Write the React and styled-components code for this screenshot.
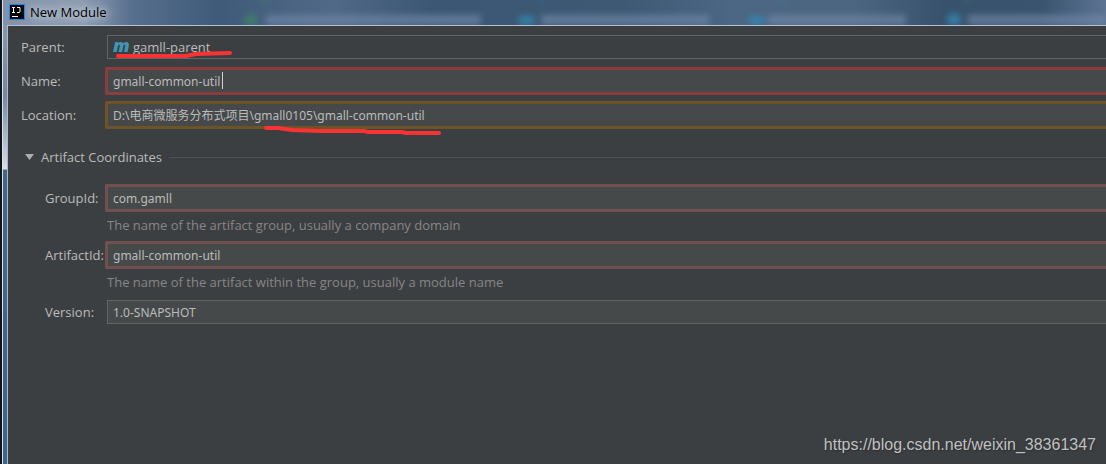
import React, { useState } from 'react';
import styled, { createGlobalStyle } from 'styled-components';

const GlobalStyle = createGlobalStyle`
  * {
    box-sizing: border-box;
  }
  body {
    margin: 0;
    background: #3c3f41;
    color: #bbbbbb;
    font-family: 'Open Sans', 'Noto Sans CJK SC', sans-serif;
    font-size: 13px;
    line-height: 18px;
    overflow-x: hidden;
  }
`;

const Window = styled.div`
  position: relative;
  min-height: 100vh;
  display: flex;
  flex-direction: column;
  border-left: 2px solid #10151c;
  background: #47617f;
`;

const TitleBar = styled.header`
  position: relative;
  display: flex;
  align-items: center;
  gap: 5px;
  height: 25px;
  padding: 0 0 2px 6px;
  overflow: hidden;
  border-left: 1px solid #dbe3ec;
  background: linear-gradient(
    90deg,
    #8292a8 0,
    #8c9bb0 80px,
    #566f8d 130px,
    #3f5b79 215px,
    #506987 330px,
    #3b5773 430px,
    #3d5974 620px,
    #4c6783 730px,
    #4c6681 850px,
    #38526d 940px,
    #3a546f 1040px,
    #5d7593 1104px
  );
`;

const Backdrop = styled.svg`
  position: absolute;
  top: 0;
  left: 0;
  width: 1103px;
  height: 25px;
  filter: blur(3px);
`;

const Logo = styled.svg`
  position: relative;
  width: 16px;
  height: 16px;
`;

const Title = styled.h1`
  position: relative;
  margin: 0;
  color: #000;
  font-size: 13px;
  font-weight: 400;
  text-shadow: 0 0 6px #c3cddb, 0 0 10px #c3cddb, 0 0 14px #c3cddb;
`;

const Frame = styled.div`
  flex: 1;
  display: flex;
  padding-left: 4px;
  border-left: 1px solid #dbe3ec;
  background: linear-gradient(
    180deg,
    #8796ab 0,
    #7588a1 70px,
    #d2d8e0 140px,
    #dfe3e8 144px,
    #476685 145px,
    #40648a 100%
  );
`;

const Panel = styled.main`
  flex: 1;
  min-width: 0;
  padding: 7px 0 0 13px;
  border-top: 1px solid #b4c1d3;
  border-left: 1px solid #a9b9cd;
  background: #3c3f41;
`;

const Row = styled.div`
  display: flex;
  align-items: center;
  margin-bottom: ${({ $gap }) => $gap || 0}px;
  padding-left: ${({ $nested }) => ($nested ? 24 : 0)}px;
`;

const Label = styled.label`
  flex: none;
  width: ${({ $nested }) => ($nested ? 60 : 84)}px;
  white-space: nowrap;
`;

const borders = {
  error: '#8b3c3c',
  warning: '#6e5324',
  invalid: '#725050',
};

/* A plain field keeps 2px around it, where the state outline would be */
const Field = styled.div`
  position: relative;
  flex: 1;
  min-width: 0;
  display: flex;
  align-items: center;
  height: ${({ $state }) => ($state ? 28 : 24)}px;
  margin: ${({ $state }) => ($state ? '0' : '2px 0 2px 2px')};
  padding-left: 5px;
  border: ${({ $state }) =>
    $state ? `3px solid ${borders[$state]}` : '1px solid #646464'};
  border-right: 0;
  border-radius: ${({ $state }) => ($state ? '2px 0 0 2px' : '0')};
  background: ${({ $plain }) => ($plain ? '#3c3f41' : '#45494a')};
`;

const Input = styled.input`
  width: 100%;
  height: 100%;
  padding: 0;
  border: 0;
  outline: 0;
  background: transparent;
  color: #bbbbbb;
  font: 12px 'Noto Sans', 'Noto Sans CJK SC', sans-serif;
`;

const Select = styled.select`
  flex: 1;
  height: 100%;
  padding: 0;
  border: 0;
  outline: 0;
  appearance: none;
  background: transparent;
  color: #bbbbbb;
  font: inherit;
`;

const MavenIcon = styled.span`
  width: 20px;
  color: #4296b4;
  font: italic 800 18px/18px 'Open Sans', sans-serif;
  transform: translateY(-2px);
`;

const Caret = styled.span`
  position: absolute;
  top: 2px;
  left: 114px;
  width: 1px;
  height: 17px;
  background: #d0d0d0;
`;

const Section = styled.button`
  display: flex;
  align-items: center;
  gap: 7px;
  width: 100%;
  margin: 19px 0 18px;
  padding: 0 0 0 4px;
  border: 0;
  background: transparent;
  color: #bbbbbb;
  font: inherit;

  &::after {
    content: '';
    flex: 1;
    height: 1px;
    background: #515151;
  }
`;

const Hint = styled.p`
  margin: 4px 0 7px 86px;
  color: #868686;
`;

const Mark = styled.svg`
  position: absolute;
  top: ${({ $top }) => $top}px;
  left: ${({ $left }) => $left}px;
  overflow: visible;
  pointer-events: none;
  fill: none;
  stroke: #f93333;
  stroke-width: 4;
  stroke-linecap: round;
  stroke-linejoin: round;
`;

const Watermark = styled.a`
  position: absolute;
  right: 10px;
  bottom: 8px;
  color: #c0c1c2;
  font: 16px/22px 'Liberation Sans', Arial, sans-serif;
  text-decoration: none;
  text-shadow: 1px 1px 1px #2b2d2f;
`;

const TextRow = ({ id, label, state, value, nested, gap, children }) => {
  const [text, setText] = useState(value);

  return (
    <Row $gap={gap} $nested={nested}>
      <Label htmlFor={id} $nested={nested}>
        {label}
      </Label>
      <Field $state={state}>
        <Input
          id={id}
          value={text}
          spellCheck={false}
          onChange={(e) => setText(e.target.value)}
        />
        {children}
      </Field>
    </Row>
  );
};

const GlassBackdrop = () => (
  <Backdrop viewBox="0 0 1103 25" aria-hidden="true">
    <g fill="#6f86a5" opacity="0.7">
      <rect x="263" y="15" width="215" height="10" />
      <rect x="538" y="15" width="168" height="10" />
      <rect x="765" y="15" width="138" height="10" />
      <rect x="965" y="15" width="138" height="10" />
    </g>
    <g fill="#3f8a62" opacity="0.8">
      <circle cx="248" cy="20" r="6" />
      <circle cx="262" cy="-1" r="4" />
      <circle cx="964" cy="-2" r="4" />
    </g>
    <g fill="#3489b4" opacity="0.8">
      <rect x="516" y="16" width="15" height="9" />
      <rect x="746" y="16" width="15" height="9" />
      <circle cx="951" cy="20" r="7" />
      <circle cx="538" cy="-2" r="4" />
      <circle cx="779" cy="-2" r="4" />
    </g>
  </Backdrop>
);

const App = () => {
  const [open, setOpen] = useState(true);

  return (
    <>
      <GlobalStyle />
      <Window>
        <TitleBar>
          <GlassBackdrop />
          <Logo viewBox="0 0 16 16" aria-hidden="true">
            <rect width="16" height="16" fill="#1c84ee" />
            <rect x="1" y="1" width="14" height="14" fill="#000" />
            <path
              d="M3 3.5h3M4.5 3.5v5M3 8.5h3M8 3.5h3v4q0 1-1 1h-2"
              fill="none"
              stroke="#fff"
            />
            <rect x="3" y="12" width="6" height="1" fill="#fff" />
          </Logo>
          <Title>New Module</Title>
        </TitleBar>
        <Frame>
          <Panel>
            <Row $gap={6}>
              <Label htmlFor="parent">Parent:</Label>
              <Field $plain>
                <MavenIcon aria-hidden="true">m</MavenIcon>
                <Select id="parent">
                  <option>gamll-parent</option>
                </Select>
                <Mark $top={16} $left={8} width="116" height="6">
                  <path d="M2 4H70L80 2L114 1" />
                </Mark>
              </Field>
            </Row>
            <TextRow
              id="name"
              label="Name:"
              state="error"
              value="gmall-common-util"
              gap={6}
            >
              <Caret />
            </TextRow>
            <TextRow
              id="location"
              label="Location:"
              state="warning"
              value="D:\电商微服务分布式项目\gmall0105\gmall-common-util"
            >
              <Mark $top={22} $left={156} width="178" height="8">
                <path d="M2 2L14 2L28 4L56 5L100 5L104 6L138 6L142 7L175 7" />
              </Mark>
            </TextRow>
            <Section type="button" onClick={() => setOpen(!open)}>
              <svg width="9" height="6" aria-hidden="true">
                <path d="M0 0h9L4.5 6z" fill="#adadad" />
              </svg>
              Artifact Coordinates
            </Section>
            {open && (
              <>
                <TextRow
                  id="group"
                  label="GroupId:"
                  state="invalid"
                  value="com.gamll"
                  nested
                />
                <Hint>
                  The name of the artifact group, usually a company domain
                </Hint>
                <TextRow
                  id="artifact"
                  label="ArtifactId:"
                  state="invalid"
                  value="gmall-common-util"
                  nested
                />
                <Hint>
                  The name of the artifact within the group, usually a module
                  name
                </Hint>
                <TextRow
                  id="version"
                  label="Version:"
                  value="1.0-SNAPSHOT"
                  nested
                />
              </>
            )}
          </Panel>
        </Frame>
        <Watermark href="https://blog.csdn.net/weixin_38361347">
          https://blog.csdn.net/weixin_38361347
        </Watermark>
      </Window>
    </>
  );
};

export default App;
